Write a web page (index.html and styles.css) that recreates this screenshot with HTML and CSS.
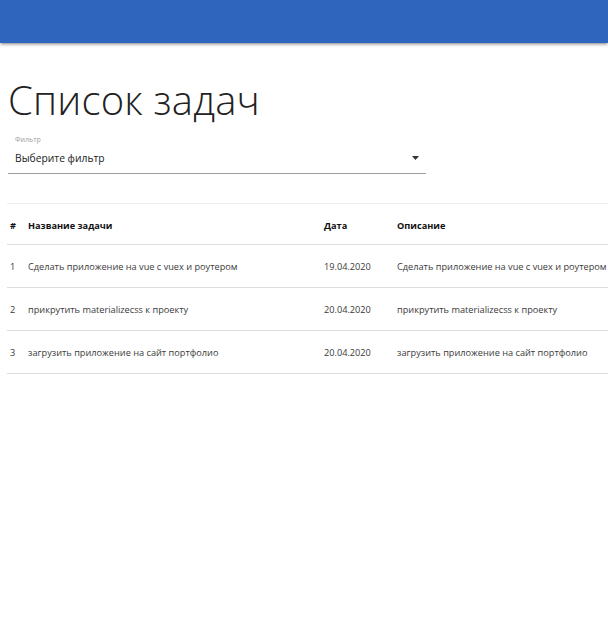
FILE: index.html
```html
<!DOCTYPE html>
<html lang="ru">
<head>
<meta charset="utf-8">
<title>Список задач</title>
<link rel="stylesheet" href="styles.css">
</head>
<body>
<nav class="navbar"></nav>
<main class="page">
  <h1 class="title">Список задач</h1>
  <div class="field">
    <label class="field-label">Фильтр</label>
    <div class="select">
      <span class="select-text">Выберите фильтр</span>
      <svg class="caret" width="7" height="4" viewBox="0 0 7 4"><path d="M0 0h7L3.5 4z" fill="#333"/></svg>
    </div>
  </div>
  <table class="tasks">
    <thead>
      <tr><th class="c-num">#</th><th class="c-name">Название задачи</th><th class="c-date">Дата</th><th class="c-desc">Описание</th></tr>
    </thead>
    <tbody>
      <tr><td>1</td><td>Сделать приложение на vue с vuex и роутером</td><td>19.04.2020</td><td>Сделать приложение на vue с vuex и роутером</td></tr>
      <tr><td>2</td><td>прикрутить materializecss к проекту</td><td>20.04.2020</td><td>прикрутить materializecss к проекту</td></tr>
      <tr><td>3</td><td>загрузить приложение на сайт портфолио</td><td>20.04.2020</td><td>загрузить приложение на сайт портфолио</td></tr>
    </tbody>
  </table>
</main>
</body>
</html>
```

FILE: styles.css
```css
html, body {
  margin: 0;
  padding: 0;
  background: #fff;
  font-family: "Open Sans", "Noto Sans", sans-serif;
  color: rgba(0,0,0,0.87);
}
.navbar {
  display: block;
  height: 43px;
  background: #3065be;
  box-shadow: 0 2px 2px 0 rgba(0,0,0,0.14), 0 3px 1px -2px rgba(0,0,0,0.12), 0 1px 5px 0 rgba(0,0,0,0.2);
}
.page {
  padding: 0 0 0 7px;
  overflow: hidden;
}
.title {
  margin: 29px 0 0 1px;
  font-size: 40px;
  font-weight: 300;
  line-height: 56px;
  letter-spacing: 0.2px;
  color: #222;
}
.field {
  margin: 7px 0 0 1px;
  width: 418px;
}
.field-label {
  display: block;
  font-size: 7px;
  line-height: 10px;
  color: #9e9e9e;
  padding-left: 7px;
}
.select {
  display: flex;
  align-items: flex-start;
  justify-content: space-between;
  box-sizing: border-box;
  height: 29px;
  border-bottom: 1px solid #9e9e9e;
  padding: 5px 7px 0 7px;
}
.select-text {
  font-size: 10.3px;
  line-height: 16px;
  color: #222;
}
.caret {
  display: block;
  margin-top: 6px;
}
.tasks {
  margin-top: 29px;
  border-collapse: collapse;
  width: 620px;
  font-size: 9.2px;
  color: #3a3a3a;
}
.tasks tr {
  border-bottom: 1px solid #ddd;
}
.tasks thead tr {
  border-top: 1px solid #eee;
}
.tasks th {
  text-align: left;
  font-weight: 700;
  color: #111;
  height: 38px;
  padding: 2px 3px 0 3px;
}
.tasks td {
  height: 42px;
  padding: 0 3px;
  white-space: nowrap;
}
.c-num { width: 12px; }
.c-name { width: 290px; }
.c-date { width: 67px; }
```
